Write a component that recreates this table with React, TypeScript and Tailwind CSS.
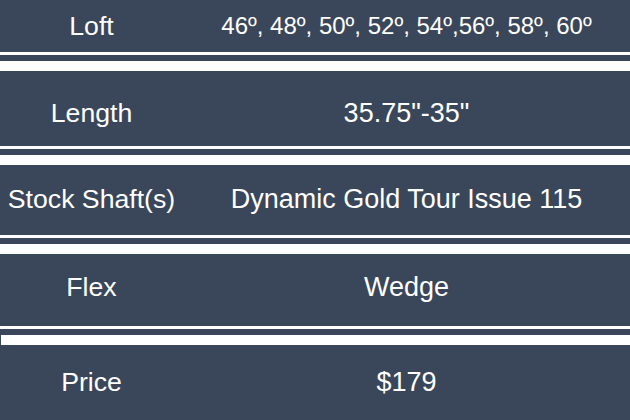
import React from "react";

const rows = [
  { label: "Loft", value: "46º, 48º, 50º, 52º, 54º,56º, 58º, 60º", h: "h-[52px]", pt: "pt-[11px]", small: true },
  { label: "Length", value: "35.75\"-35\"", h: "h-[75px]", pt: "pt-[27px]" },
  { label: "Stock Shaft(s)", value: "Dynamic Gold Tour Issue 115", h: "h-[70px]", pt: "pt-[19px]" },
  { label: "Flex", value: "Wedge", h: "h-[72px]", pt: "pt-[18px]" },
  { label: "Price", value: "$179", h: "h-[74px]", pt: "pt-[22px]" },
];

function Sep({ last }: { last?: boolean }) {
  return (
    <div className="flex flex-col">
      <div className="h-[3px] bg-white" />
      <div className="h-[6px] bg-[#3a4659]" />
      <div className="flex h-[10px]">
        {last && <div className="w-px bg-[#3a4659]" />}
        <div className="flex-1 bg-white" />
      </div>
    </div>
  );
}

export default function App() {
  return (
    <div
      className="w-[630px] h-[420px] overflow-hidden bg-[#3a4659] text-white"
      style={{ fontFamily: '"Liberation Sans", Arial, sans-serif' }}
    >
      {rows.map((r, i) => (
        <React.Fragment key={r.label}>
          <div className={`flex ${r.h} ${r.pt} bg-[#3a4659]`}>
            <div className="w-[183px] text-center text-[26.67px] leading-[30px]">{r.label}</div>
            <div
              className={`flex-1 text-center leading-[30px] ${r.small ? "text-[24px]" : "text-[27px]"}`}
            >
              {r.value}
            </div>
          </div>
          {i < rows.length - 1 && <Sep last={i === rows.length - 2} />}
        </React.Fragment>
      ))}
    </div>
  );
}
